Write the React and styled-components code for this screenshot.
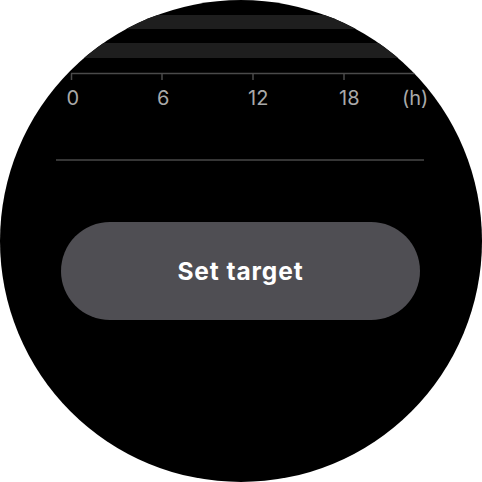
import styled, { createGlobalStyle } from "styled-components";
import React from "react";

const GlobalStyle = createGlobalStyle`
  html, body {
    margin: 0;
    padding: 0;
    background: #ffffff;
  }
`;

const Watch = styled.div`
  width: 482px;
  height: 482px;
  border-radius: 50%;
  background: #000000;
  overflow: hidden;
  display: flex;
  flex-direction: column;
  font-family: Inter, Roboto, sans-serif;
`;

const Chart = styled.svg`
  display: block;
  flex: none;
`;

const Divider = styled.div`
  height: 2px;
  margin: 39px 58px 0 56px;
  background: #363636;
`;

const TargetButton = styled.button`
  margin: 61px 0 0 61px;
  width: 359px;
  height: 98px;
  border: none;
  border-radius: 49px;
  background: #4f4e53;
  color: #ffffff;
  font-family: Inter, Roboto, sans-serif;
  font-weight: 700;
  font-size: 24.5px;
  letter-spacing: 0.9px;
  cursor: pointer;
  padding: 0;
`;

const ticks = [
  { x: 71.5, label: "0" },
  { x: 162, label: "6" },
  { x: 253, label: "12" },
  { x: 344, label: "18" },
];

const SleepChart = () => (
  <Chart width="482" height="120" viewBox="0 0 482 120">
    <rect x="0" y="15" width="482" height="14" fill="#1e1e1e" />
    <rect x="0" y="43" width="482" height="15" fill="#1e1e1e" />
    <line x1="71" y1="73.5" x2="482" y2="73.5" stroke="#4a4a4a" strokeWidth="1.5" />
    {ticks.map((t) => (
      <g key={t.label}>
        <line x1={t.x} y1="73.5" x2={t.x} y2="80" stroke="#4a4a4a" strokeWidth="1.5" />
        <text x={t.x - 5} y="105" fill="#a9a9a9" fontSize="20" fontFamily="Inter, Roboto, sans-serif">
          {t.label}
        </text>
      </g>
    ))}
    <text x="402" y="105" fill="#a9a9a9" fontSize="20" fontFamily="Inter, Roboto, sans-serif">
      (h)
    </text>
  </Chart>
);

export default function App() {
  return (
    <>
      <GlobalStyle />
      <Watch>
        <SleepChart />
        <Divider />
        <TargetButton>Set target</TargetButton>
      </Watch>
    </>
  );
}
